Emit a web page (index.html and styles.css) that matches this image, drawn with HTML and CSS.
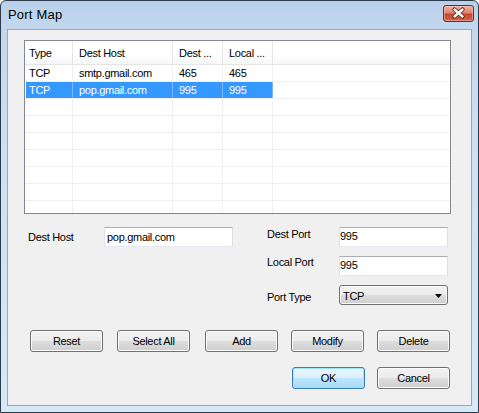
FILE: index.html
```html
<!DOCTYPE html>
<html>
<head>
<meta charset="utf-8">
<link rel="stylesheet" href="styles.css">
</head>
<body>
<div class="window">
  <div class="titlebar">
    <span class="title">Port Map</span>
    <div class="close">
      <svg width="31" height="17" viewBox="0 0 31 17">
        <path d="M11.5 4.5 L19.5 11.5 M19.5 4.5 L11.5 11.5" stroke="#5a2316" stroke-width="4.2" stroke-linecap="round" fill="none"/>
        <path d="M11.5 4.5 L19.5 11.5 M19.5 4.5 L11.5 11.5" stroke="#ffffff" stroke-width="2.4" stroke-linecap="round" fill="none"/>
      </svg>
    </div>
  </div>
  <div class="client">
    <div class="listview">
      <div class="lv-header">
        <div class="hc c1">Type</div>
        <div class="hc c2">Dest Host</div>
        <div class="hc c3">Dest ...</div>
        <div class="hc c4">Local ...</div>
        <div class="hc fill"></div>
      </div>
      <div class="lv-row">
        <div class="cell c1">TCP</div><div class="cell c2">smtp.gmail.com</div><div class="cell c3">465</div><div class="cell c4">465</div><div class="cell fill"></div>
      </div>
      <div class="lv-row selected">
        <div class="cell c1">TCP</div><div class="cell c2">pop.gmail.com</div><div class="cell c3">995</div><div class="cell c4">995</div><div class="cell fill"></div>
      </div>
      <div class="lv-row"><div class="cell c1"></div><div class="cell c2"></div><div class="cell c3"></div><div class="cell c4"></div><div class="cell fill"></div></div>
      <div class="lv-row"><div class="cell c1"></div><div class="cell c2"></div><div class="cell c3"></div><div class="cell c4"></div><div class="cell fill"></div></div>
      <div class="lv-row"><div class="cell c1"></div><div class="cell c2"></div><div class="cell c3"></div><div class="cell c4"></div><div class="cell fill"></div></div>
      <div class="lv-row"><div class="cell c1"></div><div class="cell c2"></div><div class="cell c3"></div><div class="cell c4"></div><div class="cell fill"></div></div>
      <div class="lv-row"><div class="cell c1"></div><div class="cell c2"></div><div class="cell c3"></div><div class="cell c4"></div><div class="cell fill"></div></div>
      <div class="lv-row"><div class="cell c1"></div><div class="cell c2"></div><div class="cell c3"></div><div class="cell c4"></div><div class="cell fill"></div></div>
      <div class="lv-row"><div class="cell c1"></div><div class="cell c2"></div><div class="cell c3"></div><div class="cell c4"></div><div class="cell fill"></div></div>
    </div>

    <div class="form">
      <label class="lbl lbl-host">Dest Host</label>
      <input class="txt txt-host" type="text" value="pop.gmail.com">
      <label class="lbl lbl-dport">Dest Port</label>
      <input class="txt txt-port txt-dport" type="text" value="995">
      <label class="lbl lbl-lport">Local Port</label>
      <input class="txt txt-port txt-lport" type="text" value="995">
      <label class="lbl lbl-ptype">Port Type</label>
      <div class="combo">
        <span class="combo-text">TCP</span>
        <svg class="combo-arrow" width="7" height="4" viewBox="0 0 7 4"><path d="M0 0 H7 L3.5 4 Z" fill="#000"/></svg>
      </div>
    </div>

    <div class="buttons">
      <button class="btn">Reset</button>
      <button class="btn">Select All</button>
      <button class="btn">Add</button>
      <button class="btn">Modify</button>
      <button class="btn">Delete</button>
      <button class="btn btn-default btn-ok">OK</button>
      <button class="btn btn-cancel">Cancel</button>
    </div>
  </div>
</div>
</body>
</html>
```

FILE: styles.css
```css
html, body {
  margin: 0;
  padding: 0;
  background: #ffffff;
}

body {
  font-family: "Liberation Sans", Arial, sans-serif;
  font-size: 11px;
  letter-spacing: -0.3px;
  color: #000;
}

.window {
  width: 479px;
  height: 413px;
  box-sizing: border-box;
  border: 1px solid #2c3b4b;
  border-radius: 6px 6px 0 0;
  background: linear-gradient(180deg, #b8d0e9 0px, #c3d8ee 28px, #cde1f2 160px, #d5eaf5 413px);
  display: flex;
  flex-direction: column;
  overflow: hidden;
}

.titlebar {
  height: 28px;
  display: flex;
  align-items: center;
  padding-left: 7px;
  flex-shrink: 0;
}

.title {
  font-size: 13px;
  letter-spacing: 0.2px;
  color: #000;
  margin-top: -1px;
}

.close {
  margin-left: auto;
  margin-right: 4px;
  align-self: flex-start;
  margin-top: 4px;
  width: 31px;
  height: 17px;
  box-sizing: border-box;
  border: 1px solid #6a2a1f;
  border-radius: 3px;
  background: linear-gradient(180deg, #eeb0a2 0%, #df8570 45%, #c7462c 55%, #d0654b 100%);
  box-shadow: inset 0 0 0 1px rgba(255, 215, 205, 0.45);
  display: flex;
  align-items: center;
  justify-content: center;
}

.close svg {
  display: block;
  margin: -1px;
}

.client {
  margin: 0 6px 6px;
  height: 377px;
  box-sizing: border-box;
  border: 1px solid #93a9c0;
  background: #f0f0f0;
  flex-shrink: 0;
}

/* List view */
.listview {
  margin: 10px 0 0 16px;
  width: 427px;
  height: 174px;
  box-sizing: border-box;
  border: 1px solid #828790;
  background: #ffffff;
  overflow: hidden;
}

.lv-header {
  display: flex;
  height: 24px;
  box-sizing: border-box;
  border-bottom: 1px solid #e5e5e5;
  background: linear-gradient(180deg, #ffffff 0%, #ffffff 55%, #f6f7f8 100%);
}

.hc {
  box-sizing: border-box;
  height: 23px;
  padding-top: 1px;
  line-height: 22px;
  border-right: 1px solid #e5e5e5;
  white-space: nowrap;
  overflow: hidden;
}

.c1 { width: 48px; padding-left: 4px; }
.c2 { width: 100px; padding-left: 6px; }
.c3 { width: 50px; padding-left: 6px; }
.c4 { width: 50px; padding-left: 6px; }
.fill { flex: 1; border-right: none; }

.lv-row {
  display: flex;
  height: 17px;
  box-sizing: border-box;
  border-bottom: 1px solid #f0f0f0;
}

.cell {
  box-sizing: border-box;
  height: 16px;
  line-height: 16px;
  border-right: 1px solid #f0f0f0;
  white-space: nowrap;
  overflow: hidden;
}

.cell.fill { border-right: none; }

.lv-row.selected .c1,
.lv-row.selected .c2,
.lv-row.selected .c3,
.lv-row.selected .c4 {
  background: #3399ff;
  color: #ffffff;
  border-right-color: #7ab8f5;
}

.lv-row.selected .c1 {
  box-shadow: inset 1px 0 0 #ffffff;
}

/* Form */
.form {
  margin-top: 13px;
  padding-left: 20px;
  display: grid;
  grid-template-columns: 76px 129px 34px 72px 109px;
  grid-template-rows: 20px 20px 20px;
  row-gap: 9px;
}

.lbl {
  line-height: 13px;
  white-space: nowrap;
}

.lbl-host { grid-column: 1; grid-row: 1; padding-top: 4px; }
.lbl-dport { grid-column: 4; grid-row: 1; padding-top: 1px; }
.lbl-lport { grid-column: 4; grid-row: 2; padding-top: 0; }
.lbl-ptype { grid-column: 4; grid-row: 3; padding-top: 6px; }

.txt {
  box-sizing: border-box;
  width: 100%;
  height: 20px;
  margin: 0;
  border: 1px solid;
  border-color: #abadb3 #dbdfe6 #e3e9ef #e2e3ea;
  background: #ffffff;
  font-family: "Liberation Sans", Arial, sans-serif;
  font-size: 11px;
  letter-spacing: -0.3px;
  color: #000;
  outline: none;
}

.txt-host {
  grid-column: 2;
  grid-row: 1;
  padding: 0 2px;
}

.txt-port {
  grid-column: 5;
  padding: 0 0 3px 0;
}

.txt-dport { grid-row: 1; }
.txt-lport { grid-row: 2; }

.combo {
  grid-column: 5;
  grid-row: 3;
  box-sizing: border-box;
  height: 20px;
  border: 1px solid #707070;
  border-radius: 3px;
  background: linear-gradient(180deg, #f2f2f2 0%, #ebebeb 50%, #dddddd 51%, #cfcfcf 100%);
  box-shadow: inset 0 0 0 1px #fafafa;
  display: flex;
  align-items: flex-start;
  padding-left: 3px;
  padding-right: 5px;
}

.combo-text {
  line-height: 13px;
  padding-top: 4px;
}

.combo-arrow {
  margin-left: auto;
  margin-top: 8px;
  display: block;
}

/* Buttons */
.buttons {
  margin-top: 25px;
  padding-left: 22px;
  display: grid;
  grid-template-columns: 87px 88px 86px 86px 73px;
  grid-template-rows: 22px 22px;
  column-gap: 0;
  row-gap: 15px;
}

.btn {
  box-sizing: border-box;
  width: 73px;
  height: 22px;
  margin: 0;
  padding: 0;
  border: 1px solid #707070;
  border-radius: 3px;
  background: linear-gradient(180deg, #f2f2f2 0%, #ebebeb 50%, #dddddd 51%, #cfcfcf 100%);
  box-shadow: inset 0 0 0 1px #fcfcfc;
  font-family: "Liberation Sans", Arial, sans-serif;
  font-size: 11px;
  letter-spacing: -0.3px;
  color: #000;
}

.btn-default {
  border-color: #3c7fb1;
  background: linear-gradient(180deg, #eaf6fd 0%, #d9f0fc 50%, #bee6fd 51%, #a7d9f5 100%);
  box-shadow: inset 0 0 0 1px #9fe3f7;
}

.btn-ok { grid-column: 4; grid-row: 2; margin-left: 1px; }
.btn-cancel { grid-column: 5; grid-row: 2; }
```
